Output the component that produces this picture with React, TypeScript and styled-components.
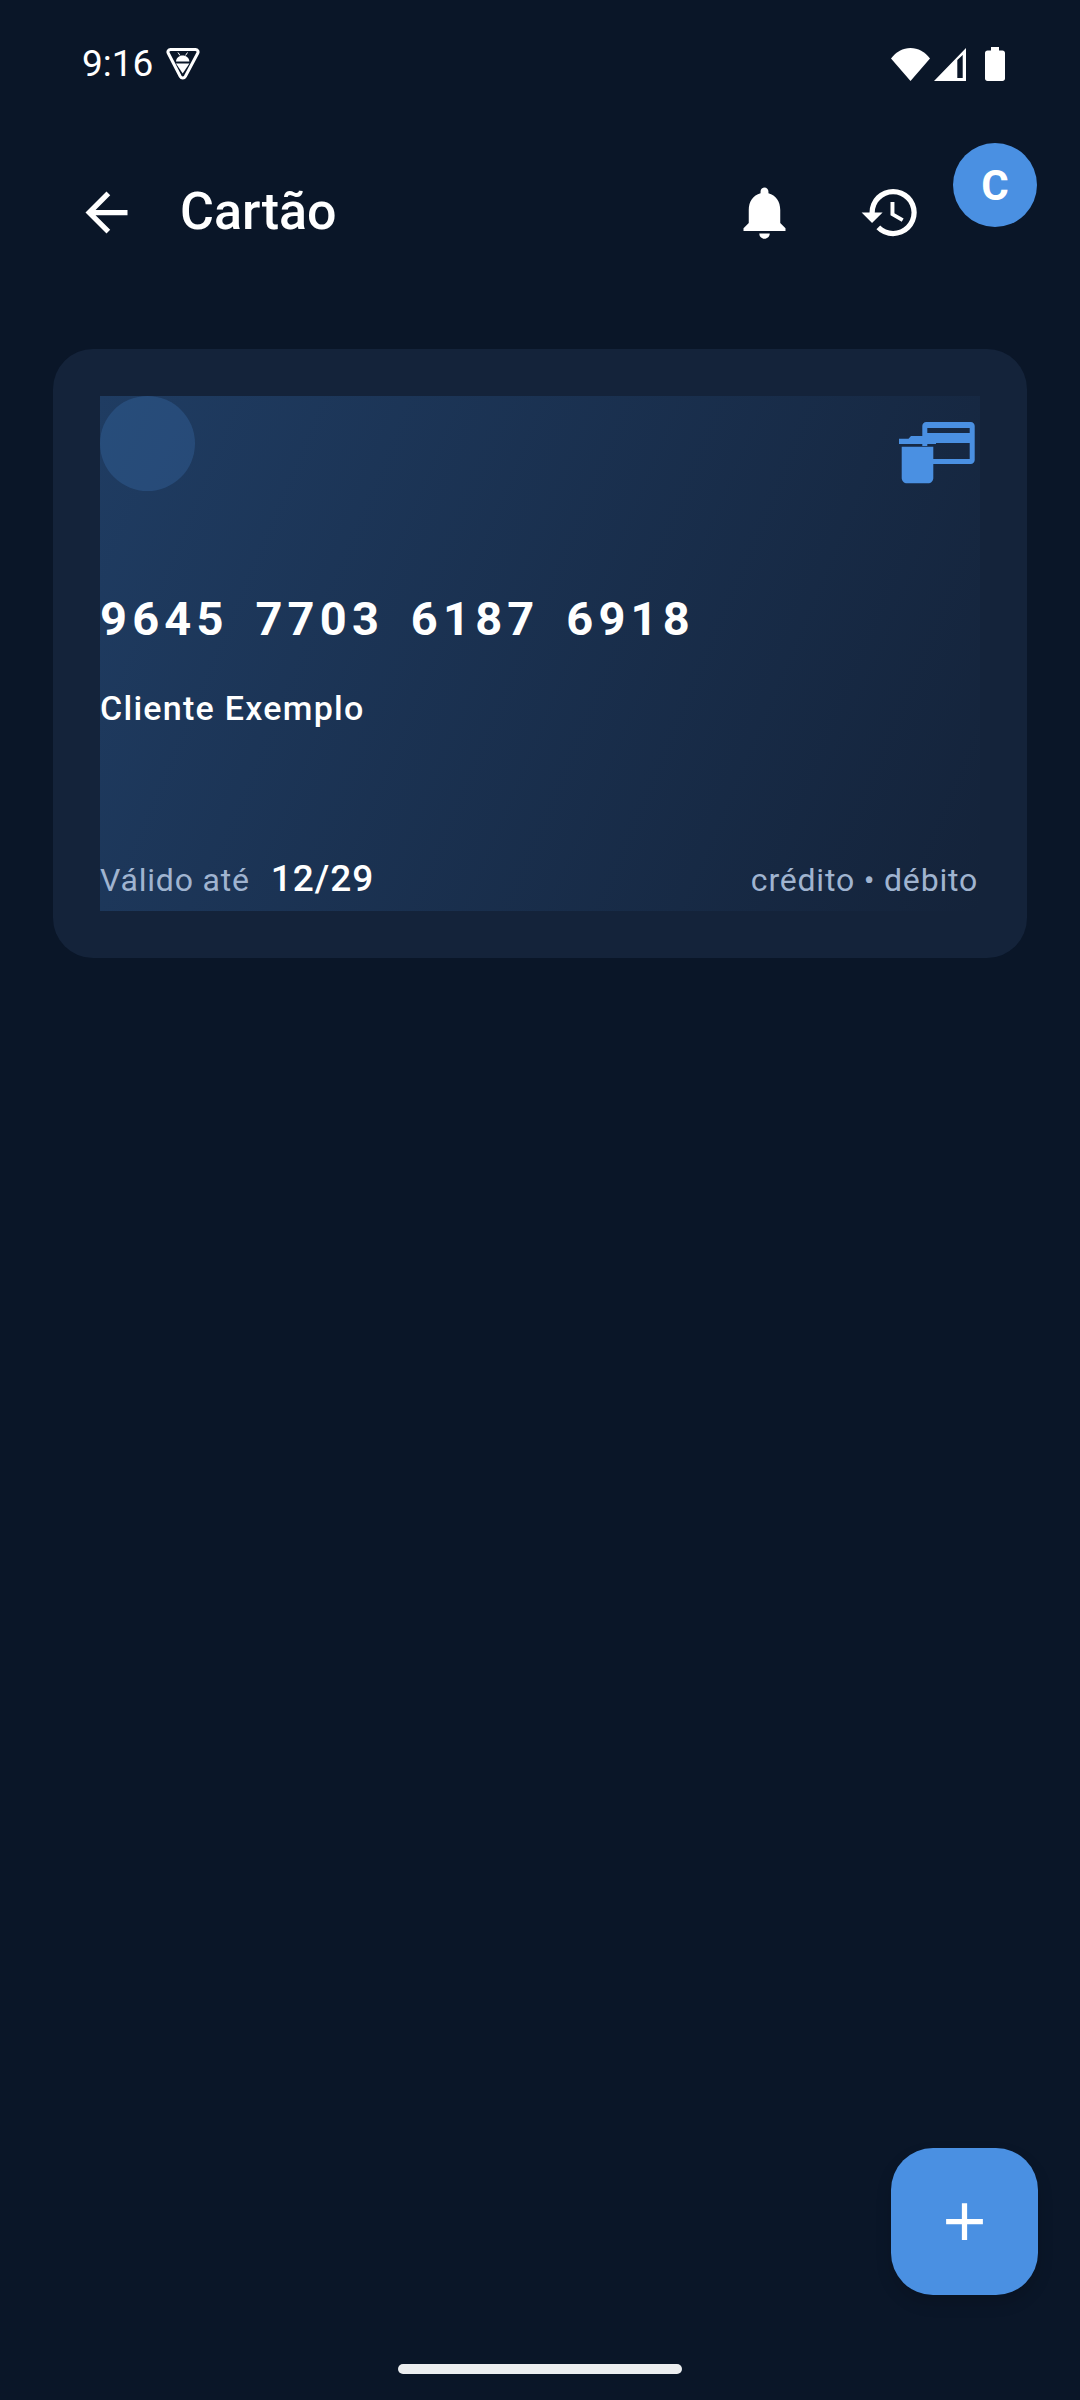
import React from 'react'
import styled, { createGlobalStyle } from 'styled-components'
import { MdAdd, MdArrowBack, MdHistory, MdNotifications } from 'react-icons/md'

const GlobalStyle = createGlobalStyle`
  html, body {
    margin: 0;
    padding: 0;
    background: #0a1628;
  }
  * {
    box-sizing: border-box;
  }
`

const VpnBadge = () => (
  <svg width="34" height="32" viewBox="0 0 34 32" fill="none">
    <path d="M4.500 1.500h25c2 0 3.200 2 2.200 3.700L19.300 28.500c-1.100 1.900-3.900 1.900-5 0L2.300 5.200C1.300 3.500 2.500 1.500 4.500 1.500z" stroke="#fff" strokeWidth="3" />
    <path d="M10 13.500c.2-3.600 3.100-6 6.700-6s6.500 2.400 6.700 6z" fill="#fff" />
    <path d="M12 4.500l2 3M21.500 4.500l-2 3" stroke="#fff" strokeWidth="1" />
    <path d="M10 15.500h13.400L16.700 25.500z" fill="#fff" />
  </svg>
)

const WifiIcon = () => (
  <svg width="39" height="33" viewBox="0 0 39 33">
    <path d="M0 10.500C5 4 12 0 19.500 0S34 4 39 10.500L19.500 33z" fill="#fff" />
  </svg>
)

const SignalIcon = () => (
  <svg width="32" height="33" viewBox="0 0 32 33">
    <path fillRule="evenodd" d="M32 0v33H0zM28.700 7L23.300 12v18h5.400z" fill="#fff" />
  </svg>
)

const BatteryIcon = () => (
  <svg width="20" height="34" viewBox="0 0 20 34">
    <path d="M6 0h8v3.500h3.500c1.400 0 2.500 1.100 2.500 2.500v25.500c0 1.400-1.100 2.500-2.500 2.500h-15C1.100 34 0 32.900 0 31.500V6c0-1.400 1.100-2.500 2.500-2.500H6z" fill="#fff" />
  </svg>
)

const CardsIcon = () => (
  <svg width="76" height="62" viewBox="0 0 76 62" fill="#4a90e2">
    <path fillRule="evenodd" d="M27.300 0h44.400c2.300 0 4 1.800 4 4v34c0 2.200-1.700 4-4 4H34v-5h36.700V21H28.300v3h-5V4c0-2.200 1.700-4 4-4zM28.300 6v5h42.400V6z" />
    <path d="M0 16.700h9.500L12 14h16v2.700h9V22H0z" />
    <path d="M2.700 24.700h31.600V56c0 2.900-2.400 5.300-5.300 5.300H8C5.100 61.300 2.700 58.900 2.700 56z" />
  </svg>
)

const App: React.FC = () => (
  <>
    <GlobalStyle />
    <Page>
      <StatusBar>
        <StatusLeft>
          <Clock>9:16</Clock>
          <VpnBadge />
        </StatusLeft>
        <StatusRight>
          <WifiIcon />
          <SignalIcon />
          <BatteryGap>
            <BatteryIcon />
          </BatteryGap>
        </StatusRight>
      </StatusBar>

      <AppBar>
        <BackButton>
          <MdArrowBack size={63} />
        </BackButton>
        <Title>Cartão</Title>
        <Actions>
          <MdNotifications size={63} />
          <MdHistory size={63} />
        </Actions>
        <Avatar>C</Avatar>
      </AppBar>

      <Content>
        <CardShell>
          <CardFace>
            <CardGlow />
            <CardTop>
              <CardsIcon />
            </CardTop>
            <CardNumber>9645&nbsp; 7703&nbsp; 6187&nbsp; 6918</CardNumber>
            <CardHolder>Cliente Exemplo</CardHolder>
            <CardBottom>
              <Expiry>
                <Muted>Válido até</Muted>
                <ExpiryDate>12/29</ExpiryDate>
              </Expiry>
              <Muted>crédito • débito</Muted>
            </CardBottom>
          </CardFace>
        </CardShell>
      </Content>

      <Fab>
        <MdAdd size={63} />
      </Fab>

      <HomeBar />
    </Page>
  </>
)

const Page = styled.div`
  position: relative;
  display: flex;
  flex-direction: column;
  width: 1080px;
  height: 2400px;
  overflow: hidden;
  background: #0a1628;
  color: #fff;
  font-family: Roboto, 'Noto Sans', sans-serif;
`

const StatusBar = styled.div`
  display: flex;
  align-items: center;
  justify-content: space-between;
  height: 128px;
  padding: 0 75px 0 82px;
`

const StatusLeft = styled.div`
  display: flex;
  align-items: center;
  gap: 13px;
`

const Clock = styled.span`
  font-size: 37px;
  line-height: 44px;
`

const StatusRight = styled.div`
  display: flex;
  align-items: center;
  gap: 4px;
`

const BatteryGap = styled.div`
  display: flex;
  margin-left: 15px;
`

const AppBar = styled.header`
  position: relative;
  display: flex;
  align-items: center;
  height: 168px;
  padding: 0 0 0 75px;
`

const BackButton = styled.div`
  display: flex;
  width: 63px;
  margin-right: 42px;
`

const Title = styled.h1`
  margin: 0;
  font-size: 52px;
  font-weight: 500;
  line-height: 60px;
`

const Actions = styled.div`
  display: flex;
  align-items: center;
  gap: 63px;
  margin-left: auto;
  margin-right: 158px;
`

const Avatar = styled.div`
  position: absolute;
  top: 15px;
  right: 43px;
  display: flex;
  align-items: center;
  justify-content: center;
  width: 84px;
  height: 84px;
  border-radius: 50%;
  background: #4a90e2;
  font-size: 42px;
  font-weight: 700;
`

const Content = styled.main`
  padding: 53px 53px 0;
`

const CardShell = styled.section`
  height: 609px;
  padding: 47px;
  border-radius: 40px;
  background: #14233a;
`

const CardFace = styled.div`
  position: relative;
  display: flex;
  flex-direction: column;
  height: 515px;
  padding-right: 2px;
  background: linear-gradient(113deg, #1f3c62 0%, #14233a 100%);
`

const CardGlow = styled.div`
  position: absolute;
  top: 0;
  left: 0;
  width: 95px;
  height: 95px;
  border-radius: 50%;
  background: rgba(74, 144, 226, 0.2);
`

const CardTop = styled.div`
  display: flex;
  justify-content: flex-end;
  height: 195px;
  padding: 26px 3px 0 0;
`

const CardNumber = styled.div`
  font-size: 47px;
  font-weight: 700;
  line-height: 56px;
  letter-spacing: 5.2px;
  word-spacing: -3.5px;
`

const CardHolder = styled.div`
  margin-top: 41px;
  font-size: 34px;
  font-weight: 500;
  line-height: 40px;
  letter-spacing: 1.27px;
`

const CardBottom = styled.div`
  display: flex;
  align-items: baseline;
  justify-content: space-between;
  margin-top: auto;
  padding-bottom: 11px;
`

const Expiry = styled.div`
  display: flex;
  align-items: baseline;
  gap: 21px;
`

const Muted = styled.span`
  color: #a0b4d0;
  font-size: 32px;
  letter-spacing: 0.8px;
`

const ExpiryDate = styled.span`
  font-size: 37px;
  font-weight: 500;
  letter-spacing: 1px;
`

const Fab = styled.div`
  position: absolute;
  top: 2148px;
  left: 891px;
  display: flex;
  align-items: center;
  justify-content: center;
  width: 147px;
  height: 147px;
  border-radius: 42px;
  background: #4a90e2;
  box-shadow: 0 8px 16px rgba(0, 0, 0, 0.15);
`

const HomeBar = styled.div`
  position: absolute;
  top: 2364px;
  left: 398px;
  width: 284px;
  height: 10px;
  border-radius: 5px;
  background: #eceef0;
`

export default App
